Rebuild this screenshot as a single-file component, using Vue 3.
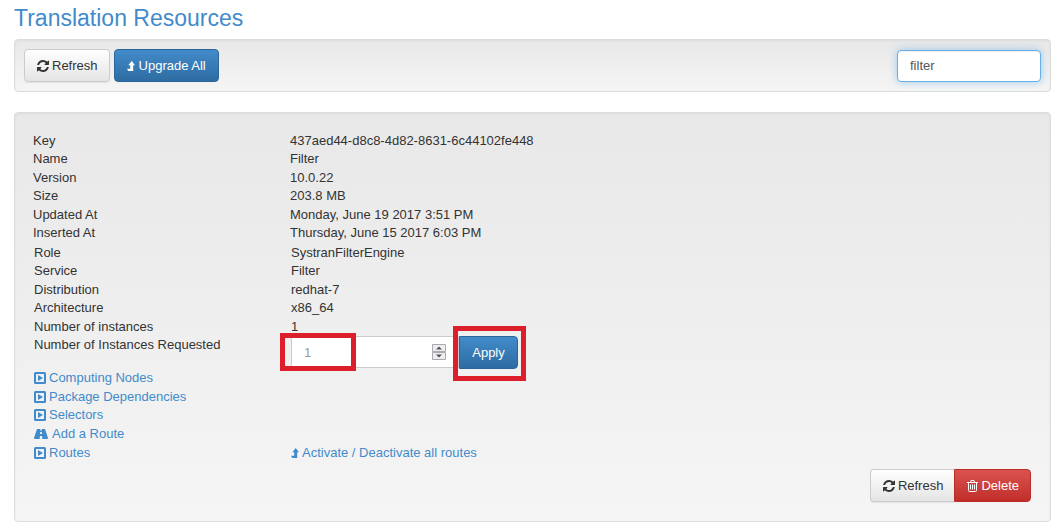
<script setup>
import { ref } from 'vue'

const search = ref('filter')
const requested = ref(1)

const general = [
  ['Key', '437aed44-d8c8-4d82-8631-6c44102fe448'],
  ['Name', 'Filter'],
  ['Version', '10.0.22'],
  ['Size', '203.8 MB'],
  ['Updated At', 'Monday, June 19 2017 3:51 PM'],
  ['Inserted At', 'Thursday, June 15 2017 6:03 PM'],
]

const deployment = [
  ['Role', 'SystranFilterEngine'],
  ['Service', 'Filter'],
  ['Distribution', 'redhat-7'],
  ['Architecture', 'x86_64'],
  ['Number of instances', '1'],
]

const links = [
  { text: 'Computing Nodes', icon: 'play' },
  { text: 'Package Dependencies', icon: 'play' },
  { text: 'Selectors', icon: 'play' },
  { text: 'Add a Route', icon: 'road' },
  { text: 'Routes', icon: 'play', action: 'Activate / Deactivate all routes' },
]
</script>

<template>
  <svg class="defs" aria-hidden="true">
    <symbol id="i-refresh" viewBox="0 0 1536 1536">
      <path d="M1511 928q0 5-1 7-64 268-268 434.500T764 1536q-146 0-282.500-55T238 1324l-129 129q-19 19-45 19t-45-19-19-45V960q0-26 19-45t45-19h448q26 0 45 19t19 45-19 45l-137 137q71 66 161 102t187 36q134 0 250-65t186-179q11-17 53-117 8-23 30-23h192q13 0 22.500 9.500t9.500 22.500zM1536 128v448q0 26-19 45t-45 19h-448q-26 0-45-19t-19-45 19-45l138-138Q969 256 768 256q-134 0-250 65T332 500q-11 17-53 117-8 23-30 23H50q-13 0-22.500-9.500T18 608v-7q65-268 270-434.500T768 0q146 0 284 55.500T1297 212l130-129q19-19 45-19t45 19 19 45z" />
    </symbol>
    <symbol id="i-level" viewBox="0 0 8 10">
      <path d="M4.700 0 8 4.200H6.200V10H1.200L0 7.800H3.200V4.200H1.300z" />
    </symbol>
    <symbol id="i-play" viewBox="0 0 12 12">
      <path fill-rule="evenodd" d="M1.500 0h9Q12 0 12 1.500v9Q12 12 10.500 12h-9Q0 12 0 10.500v-9Q0 0 1.500 0zM2 2v8h8V2zM4 3 9 6 4 9z" />
    </symbol>
    <symbol id="i-road" viewBox="0 0 14 10">
      <path fill-rule="evenodd" d="M3 0H6.300L6.200 1.500H7.800L7.700 0H11L14 9Q14 10 13.200 10H8.300L8.100 7H5.900L5.700 10H.8Q0 10 0 9zM6.200 3 6 5H8L7.800 3z" />
    </symbol>
    <symbol id="i-trash" viewBox="0 0 11 12">
      <path fill="none" stroke="currentColor" d="M0 2.500H11M3.500 2.500 4 .5H7L7.500 2.500M1.500 3V10.500Q1.500 11.500 2.500 11.500H8.500Q9.500 11.500 9.500 10.500V3M3.500 4.500V9.500M5.500 4.500V9.500M7.500 4.500V9.500" />
    </symbol>
  </svg>

  <main class="page">
    <h1>Translation Resources</h1>

    <section class="well toolbar">
      <button type="button" class="btn default"><svg class="icon"><use href="#i-refresh" /></svg>Refresh</button>
      <button type="button" class="btn primary"><svg class="icon arrow"><use href="#i-level" /></svg>Upgrade All</button>
      <input v-model="search" class="search" type="text" aria-label="Search resources" />
    </section>

    <section class="well details">
      <dl class="rows">
        <template v-for="[name, value] in general" :key="name">
          <dt>{{ name }}</dt>
          <dd>{{ value }}</dd>
        </template>
      </dl>
      <dl class="rows inset">
        <template v-for="[name, value] in deployment" :key="name">
          <dt>{{ name }}</dt>
          <dd>{{ value }}</dd>
        </template>
      </dl>
      <form class="request" @submit.prevent>
        <label for="requested">Number of Instances Requested</label>
        <div class="group">
          <div class="number marked">
            <input id="requested" v-model="requested" type="number" min="0" />
            <svg class="spinner" viewBox="0 0 14 16" aria-hidden="true">
              <path fill="#eee" stroke="#a9a9b0" d="M.5.500h13v7H.5zM.5 8.500h13v7H.5z" />
              <path fill="#50506a" d="M7 2.500 10 5.500H4zM7 13.500 4 10.500h6z" />
            </svg>
          </div>
          <div class="apply marked">
            <button type="submit" class="btn primary">Apply</button>
          </div>
        </div>
      </form>
      <ul class="links">
        <li v-for="link in links" :key="link.text">
          <a href="#"><svg class="icon" :class="link.icon"><use :href="'#i-' + link.icon" /></svg>{{ link.text }}</a>
          <a v-if="link.action" href="#"><svg class="icon arrow"><use href="#i-level" /></svg>{{ link.action }}</a>
        </li>
      </ul>
      <div class="actions">
        <button type="button" class="btn default"><svg class="icon"><use href="#i-refresh" /></svg>Refresh</button>
        <button type="button" class="btn danger"><svg class="icon trash"><use href="#i-trash" /></svg>Delete</button>
      </div>
    </section>
  </main>
</template>

<style>
body {
  margin: 0;
  background: #fff;
}
</style>

<style scoped>
*,
*::after {
  box-sizing: border-box;
}

.defs {
  position: absolute;
  width: 0;
  height: 0;
}

.page {
  padding: 4px 10px 7px 14px;
  font: 13px/18px "Liberation Sans", Arial, sans-serif;
  color: #333;
}

h1 {
  margin: 0 0 7px;
  font-size: 23px;
  line-height: 28px;
  font-weight: 400;
  color: #428bca;
}

.well {
  border: 1px solid #dcdcdc;
  border-radius: 4px;
  background: linear-gradient(#e8e8e8, #f5f5f5);
  box-shadow: inset 0 1px 3px rgba(0, 0, 0, 0.05), 0 1px 0 rgba(255, 255, 255, 0.1);
}

.toolbar {
  display: flex;
  align-items: center;
  gap: 4px;
  margin-bottom: 20px;
  padding: 9px;
}

.btn {
  display: inline-flex;
  align-items: center;
  justify-content: center;
  height: 33px;
  padding: 0 11px 0 12px;
  border: 1px solid #ccc;
  border-radius: 4px;
  font: inherit;
  white-space: nowrap;
  cursor: pointer;
}

.default {
  color: #333;
  background: linear-gradient(#fff, #e4e4e4);
  box-shadow: inset 0 1px 0 rgba(255, 255, 255, 0.15), 0 1px 1px rgba(0, 0, 0, 0.075);
}

.primary {
  padding: 0 12px;
  color: #fff;
  border-color: #2b669a;
  background: linear-gradient(#428bca, #2d6ca2);
}

.danger {
  color: #fff;
  border-color: #b92c28;
  background: linear-gradient(#d9534f, #c12e2a);
}

.icon {
  flex: none;
  width: 12px;
  height: 12px;
  margin-right: 3px;
  fill: currentColor;
}

.icon.arrow {
  width: 8px;
  height: 10px;
}

.primary .icon.arrow,
.icon.road {
  margin-right: 4px;
}

.icon.road {
  width: 14px;
  height: 10px;
}

.icon.trash {
  width: 11px;
  fill: none;
}

input {
  border: 1px solid #ccc;
  background: #fff;
  font: inherit;
  outline: 0;
}

.search {
  width: 144px;
  height: 32px;
  margin-left: auto;
  padding: 0 12px;
  border-color: #66afe9;
  border-radius: 4px;
  color: #555;
  box-shadow: inset 0 1px 1px rgba(0, 0, 0, 0.075), 0 0 8px rgba(102, 175, 233, 0.6);
}

.details {
  padding: 19px 19px 19px 18px;
}

.rows {
  display: grid;
  grid-template-columns: 257px 1fr;
  grid-auto-rows: 18px 19px;
  margin: 0 0 1px;
}

.rows.inset,
.request,
.links {
  margin: 0;
  padding-left: 1px;
}

dt,
dd {
  margin: 0;
}

.request {
  display: grid;
  grid-template-columns: 257px 1fr;
  align-items: start;
}

.group {
  display: flex;
}

.number,
.apply {
  position: relative;
}

.number input {
  display: block;
  width: 168px;
  height: 32px;
  padding: 0 12px;
  color: #999;
  appearance: textfield;
}

.number input::-webkit-inner-spin-button {
  appearance: none;
}

.spinner {
  position: absolute;
  top: 8px;
  right: 13px;
  width: 14px;
  height: 16px;
}

.apply .btn {
  width: 59px;
  border-radius: 0 4px 4px 0;
}

.marked::after {
  content: "";
  position: absolute;
  border: 5px solid #dc1f2a;
  pointer-events: none;
}

.number::after {
  top: -3px;
  left: -11px;
  width: 76px;
  height: 38px;
}

.apply::after {
  inset: -10px -8px -12px -6px;
}

.links {
  display: grid;
  grid-auto-rows: 19px 19px 18px;
  margin-top: -1px;
  list-style: none;
}

.links li {
  display: grid;
  grid-template-columns: 257px 1fr;
}

.links a {
  display: flex;
  align-items: center;
  color: #428bca;
  text-decoration: none;
}

.actions {
  display: flex;
  justify-content: flex-end;
  margin-top: 7px;
}

.actions .default {
  border-right: 0;
  border-radius: 4px 0 0 4px;
}

.actions .danger {
  border-radius: 0 4px 4px 0;
}
</style>
